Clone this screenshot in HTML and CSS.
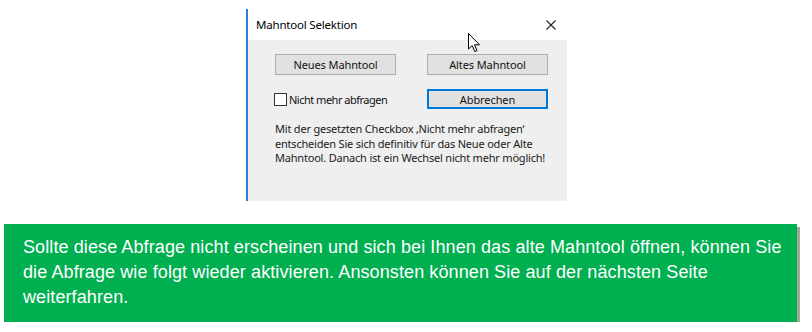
FILE: index.html
```html
<!DOCTYPE html>
<html lang="de">
<head>
<meta charset="UTF-8" />
<title>Mahntool Selektion</title>
<link rel="stylesheet" href="styles.css">
</head>
<body>

<!-- Dialogfenster -->
<div class="dialog">
  <div class="titlebar">
    <span class="title">Mahntool Selektion</span>
    <svg class="close" viewBox="0 0 10 10" width="10" height="10">
      <path d="M0.5 0.5 L9.5 9.5 M9.5 0.5 L0.5 9.5" stroke="#222" stroke-width="1.1" fill="none"/>
    </svg>
  </div>
  <div class="dialog-body">
    <div class="grid">
      <button class="btn">Neues Mahntool</button>
      <button class="btn">Altes Mahntool</button>
      <label class="check"><span class="box"></span>Nicht mehr abfragen</label>
      <button class="btn default">Abbrechen</button>
    </div>
    <p class="hint">Mit der gesetzten Checkbox ‚Nicht mehr abfragen‘<br>entscheiden Sie sich definitiv für das Neue oder Alte<br>Mahntool. Danach ist ein Wechsel nicht mehr möglich!</p>
  </div>
  <!-- Mauszeiger -->
  <svg class="cursor" viewBox="0 0 13 20" width="13" height="20">
    <path d="M0.5 0.5 L0.5 16 L4.2 12.6 L6.8 18.6 L9 17.6 L6.5 11.8 L11.5 11.8 Z" fill="#fff" stroke="#000" stroke-width="1" stroke-linejoin="miter"/>
  </svg>
</div>

<!-- Hinweis -->
<div class="note">
  Sollte diese Abfrage nicht erscheinen und sich bei Ihnen das alte Mahntool öffnen, können Sie<br>
  die Abfrage wie folgt wieder aktivieren. Ansonsten können Sie auf der nächsten Seite<br>
  weiterfahren.
</div>

</body>
</html>
```

FILE: styles.css
```css
* {
  margin: 0;
  padding: 0;
  box-sizing: border-box;
}
body {
  background: #fff;
  font-family: 'Noto Sans', sans-serif;
}

/* Dialog */
.dialog {
  position: relative;
  width: 321px;
  margin: 9px 0 0 246px;
  border-left: 2px solid #2b7fd4;
}
.titlebar {
  height: 31px;
  display: flex;
  align-items: center;
  justify-content: space-between;
  padding: 0 11px 0 8px;
  background: #fff;
}
.title {
  font-size: 11.5px;
  letter-spacing: -0.2px;
  color: #000;
}
.dialog-body {
  background: #efefef;
  height: 161px;
  padding: 14px 0 0 27px;
}
.grid {
  display: grid;
  grid-template-columns: 121px 121px;
  column-gap: 31px;
  row-gap: 14px;
}
.btn {
  height: 21px;
  background: #e1e1e1;
  border: 1px solid #adadad;
  font-family: 'Noto Sans', sans-serif;
  font-size: 11px;
  letter-spacing: -0.1px;
  color: #111;
}
.btn.default {
  height: 20px;
  border: 2px solid #0078d7;
}
.check {
  display: flex;
  align-items: center;
  white-space: nowrap;
  font-size: 11px;
  letter-spacing: -0.5px;
  color: #111;
  margin-left: -1px;
}
.box {
  width: 13px;
  height: 13px;
  background: #fff;
  border: 1px solid #333;
  margin-right: 2px;
}
.hint {
  margin-top: 13px;
  font-size: 11px;
  line-height: 14.5px;
  color: #1a1a1a;
  letter-spacing: -0.2px;
}
.cursor {
  position: absolute;
  left: 220px;
  top: 24px;
}

/* Grüner Hinweis */
.note {
  width: 793px;
  height: 98px;
  margin: 23px 0 0 4px;
  background: #00b050;
  box-shadow: 3px 3px 0 #a3a99c;
  color: #fff;
  font-family: 'Liberation Sans', Arial, sans-serif;
  font-size: 18px;
  letter-spacing: 0.1px;
  line-height: 25px;
  padding: 11px 0 0 19px;
  white-space: nowrap;
}
```
